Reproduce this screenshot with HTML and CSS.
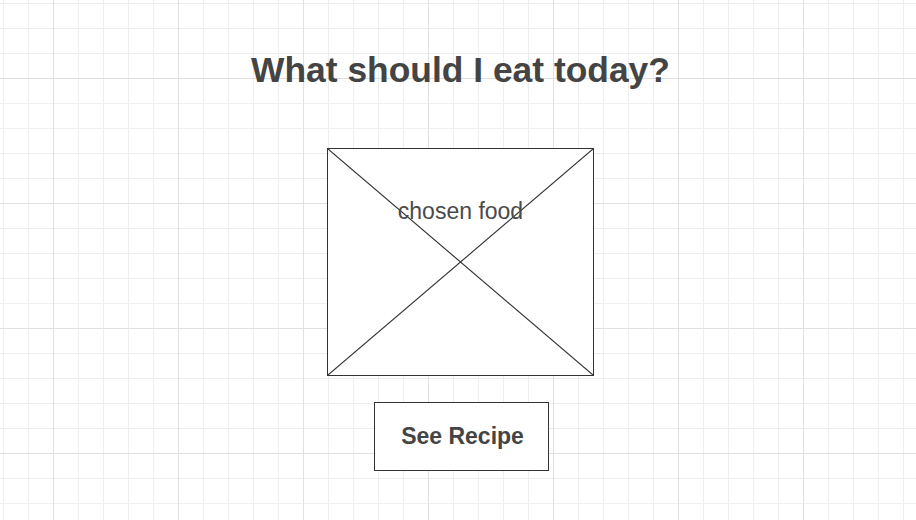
FILE: index.html
```html
<!DOCTYPE html>
<html lang="en">
<head>
<meta charset="utf-8">
<title>What should I eat today?</title>
<link rel="stylesheet" href="styles.css">
</head>
<body>
<main class="page">
  <h1 class="title">What should I eat today?</h1>
  <div class="food-box">
    <svg class="cross" viewBox="0 0 265 226" preserveAspectRatio="none" aria-hidden="true">
      <line x1="0" y1="0" x2="265" y2="226"/>
      <line x1="265" y1="0" x2="0" y2="226"/>
    </svg>
    <span class="food-label">chosen food</span>
  </div>
  <button class="recipe-btn" type="button">See Recipe</button>
</main>
</body>
</html>
```

FILE: styles.css
```css
html, body {
  margin: 0;
  padding: 0;
}

body {
  width: 916px;
  height: 520px;
  overflow: hidden;
  background-color: #ffffff;
  background-image:
    linear-gradient(to right, #e0e0e0 1px, transparent 1px),
    linear-gradient(to bottom, #e0e0e0 1px, transparent 1px),
    linear-gradient(to right, #eeeeee 1px, transparent 1px),
    linear-gradient(to bottom, #eeeeee 1px, transparent 1px);
  background-size: 125px 125px, 125px 125px, 25px 25px, 25px 25px;
  background-position: 53px 0, 0 78px, 3px 0, 0 3px;
  font-family: "Liberation Sans", Arial, sans-serif;
  color: #444444;
}

.page {
  display: flex;
  flex-direction: column;
  align-items: center;
  padding-top: 50px;
  padding-left: 5px;
}

.title {
  margin: 0;
  font-size: 35.4px;
  line-height: 40px;
  font-weight: 700;
  color: #444444;
}

.food-box {
  position: relative;
  box-sizing: border-box;
  width: 267px;
  height: 228px;
  margin-top: 58px;
  border: 1px solid #333333;
  background: #ffffff;
  display: flex;
  justify-content: center;
  align-items: flex-start;
  padding-top: 49px;
}

.cross {
  position: absolute;
  left: 0;
  top: 0;
  width: 100%;
  height: 100%;
}

.cross line {
  stroke: #333333;
  stroke-width: 1.15;
}

.food-label {
  position: relative;
  font-size: 23px;
  line-height: 26px;
  color: #4a4a4a;
}

.recipe-btn {
  box-sizing: border-box;
  width: 175px;
  height: 69px;
  margin-top: 26px;
  margin-left: 2px;
  padding: 0 0 0 2px;
  border: 1px solid #333333;
  background: #ffffff;
  font-family: "Liberation Sans", Arial, sans-serif;
  font-size: 23px;
  line-height: 67px;
  font-weight: 700;
  color: #444444;
  text-align: center;
}
```
